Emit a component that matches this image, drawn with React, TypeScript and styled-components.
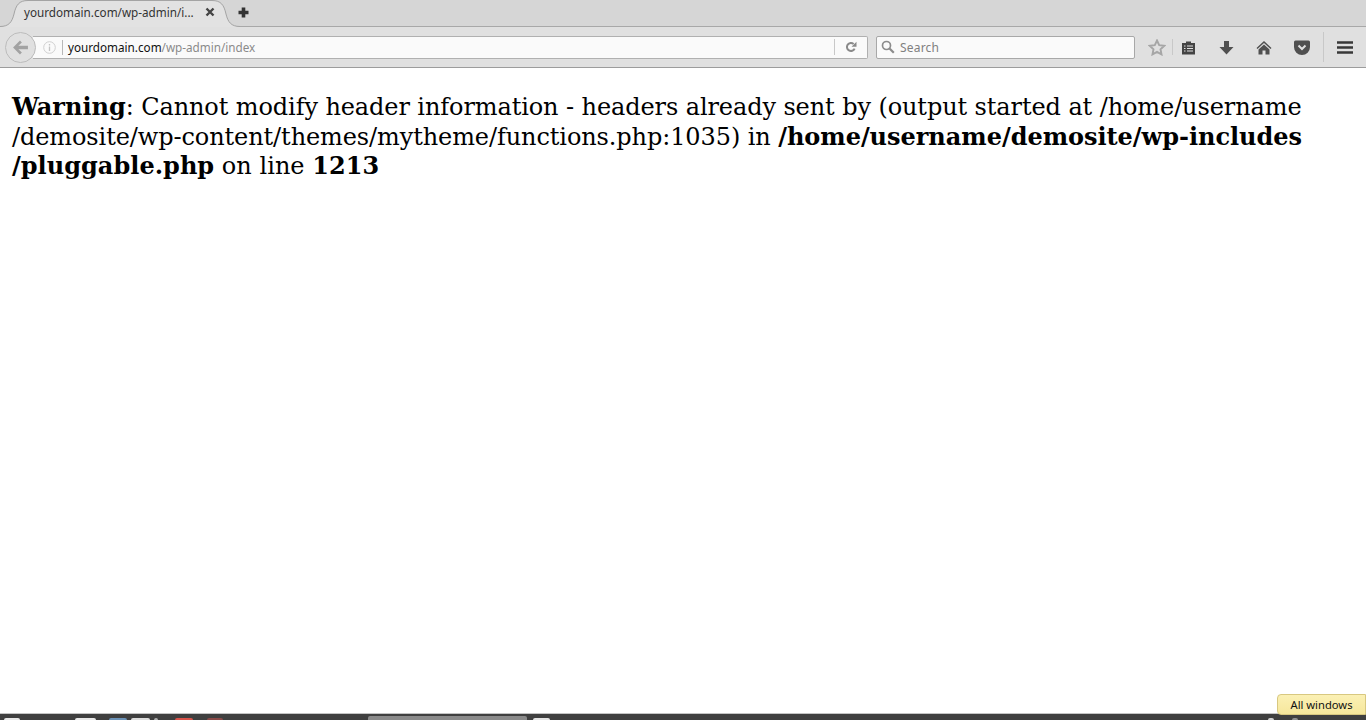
import styled, { createGlobalStyle } from "styled-components";

const Global = createGlobalStyle`
	html, body {
		margin: 0;
		padding: 0;
		height: 100%;
		overflow: hidden;
		background: #fff;
	}
`;

const Window = styled.div`
	position: relative;
	height: 720px;
	display: flex;
	flex-direction: column;
	font-family: "Noto Sans", "Open Sans", sans-serif;
`;

const TabBar = styled.div`
	height: 26px;
	background: #d6d6d6;
	border-bottom: 1px solid #a8a8a8;
	display: flex;
	align-items: flex-start;
	box-sizing: content-box;
`;

const Tab = styled.div`
	position: relative;
	width: 230px;
	height: 27px;
	padding: 0 15px 3px 24px;
	box-sizing: border-box;
	display: flex;
	align-items: center;
	justify-content: space-between;
	flex-shrink: 0;
`;

const TabShape = styled.svg`
	position: absolute;
	left: 0;
	top: 0;
`;

const TabTitle = styled.span`
	position: relative;
	font-size: 11.7px;
	color: #333;
	white-space: nowrap;
`;

const CloseIcon = styled.svg`
	position: relative;
`;

const NewTab = styled.div`
	width: 26px;
	height: 26px;
	display: flex;
	align-items: center;
	justify-content: center;
	padding-bottom: 2px;
	box-sizing: border-box;
`;

const NavBar = styled.div`
	height: 40px;
	background: #e0e0e0;
	border-bottom: 1px solid #9c9c9c;
	display: flex;
	align-items: center;
	padding-left: 5px;
`;

const BackButton = styled.div`
	position: relative;
	z-index: 1;
	width: 31px;
	height: 31px;
	box-sizing: border-box;
	border-radius: 50%;
	border: 1px solid #bcbcbc;
	background: #e0e0e0;
	display: flex;
	align-items: center;
	justify-content: center;
	flex-shrink: 0;
`;

const UrlBar = styled.div`
	width: 835px;
	height: 23px;
	margin-left: -3px;
	box-sizing: border-box;
	background: #fafafa;
	border: 1px solid #b0b0b0;
	border-left: none;
	border-radius: 0 2px 2px 0;
	display: flex;
	align-items: center;
	padding-left: 10px;
	flex-shrink: 0;
`;

const InfoIcon = styled.svg`
	margin-right: 6px;
	flex-shrink: 0;
`;

const Divider = styled.span<{ $h: number; $c?: string }>`
	width: 1px;
	height: ${(p) => p.$h}px;
	background: ${(p) => p.$c ?? "#c8c8c8"};
	flex-shrink: 0;
`;

const UrlText = styled.div`
	flex: 1;
	margin-left: 5px;
	font-size: 11.7px;
	color: #111;
	white-space: nowrap;
	span {
		color: #8a8a8a;
	}
`;

const Reload = styled.div`
	width: 32px;
	display: flex;
	justify-content: center;
`;

const SearchBox = styled.div`
	width: 259px;
	height: 23px;
	margin-left: 8px;
	box-sizing: border-box;
	background: #fafafa;
	border: 1px solid #a8a8a8;
	border-radius: 2px;
	display: flex;
	align-items: center;
	gap: 5px;
	padding-left: 4px;
	font-size: 12px;
	letter-spacing: 0.2px;
	color: #808080;
	flex-shrink: 0;
`;

const Tools = styled.div`
	flex: 1;
	display: flex;
	align-items: center;
`;

const ToolIcon = styled.div<{ $w: number; $l?: number }>`
	width: ${(p) => p.$w}px;
	padding-left: ${(p) => p.$l ?? 0}px;
	box-sizing: border-box;
	display: flex;
	justify-content: center;
	flex-shrink: 0;
`;

const Page = styled.div`
	flex: 1;
	padding: 24px 12px 0;
	background: #fff;
	font-family: "DejaVu Serif", serif;
	font-size: 24px;
	line-height: 29px;
	letter-spacing: -0.1px;
	color: #000;
	b {
		letter-spacing: -0.03px;
	}
`;

const LastLine = styled.div`
	margin-top: -1px;
	letter-spacing: 0.03px;
	b {
		letter-spacing: 0.03px;
	}
`;

const Taskbar = styled.div`
	height: 7px;
	background: #3f3f3f;
	border-top: 1px solid #c4c4c4;
	box-sizing: border-box;
	display: flex;
	align-items: flex-start;
	overflow: hidden;
`;

const Chip = styled.span<{ $w: number; $c: string; $l: number; $t: number }>`
	width: ${(p) => p.$w}px;
	height: 6px;
	margin-left: ${(p) => p.$l}px;
	margin-top: ${(p) => p.$t}px;
	background: ${(p) => p.$c};
	border-radius: 2px 2px 0 0;
	flex-shrink: 0;
`;

const Tooltip = styled.div`
	position: absolute;
	right: 0;
	top: 694px;
	width: 89px;
	height: 21px;
	box-sizing: border-box;
	background: linear-gradient(#fbf0b4, #f6e79c);
	border: 1px solid #d8c880;
	border-radius: 4px 0 0 4px;
	font-size: 11.2px;
	color: #111;
	display: flex;
	align-items: center;
	justify-content: center;
`;

const chips = [
	{ l: 4, w: 16, t: 4, c: "#e8e8e8" },
	{ l: 55, w: 21, t: 4, c: "#e8e8e8" },
	{ l: 13, w: 18, t: 4, c: "#6c93b8" },
	{ l: 4, w: 19, t: 4, c: "#dddddd" },
	{ l: 4, w: 4, t: 4, c: "#b0b0b0" },
	{ l: 17, w: 18, t: 4, c: "#d9534a" },
	{ l: 14, w: 16, t: 4, c: "#8a4a48" },
	{ l: 145, w: 159, t: 2, c: "#8a8a8a" },
	{ l: 6, w: 17, t: 4, c: "#e4e4e4" },
	{ l: 718, w: 6, t: 4, c: "#d0d0d0" },
	{ l: 18, w: 6, t: 4, c: "#909090" },
];

function App() {
	return (
		<Window>
			<Global />
			<TabBar>
				<Tab>
					<TabShape width="242" height="27" viewBox="0 0 242 27">
						<path
							d="M0 26.500C9 26.500 12 22 14 14C16 5 19 0.500 28 0.500H212C221 0.500 224 5 226 14C228 22 231 26.500 240 26.500V27H0z"
							fill="#e2e2e2"
						/>
						<path
							d="M0 26.500C9 26.500 12 22 14 14C16 5 19 0.500 28 0.500H212C221 0.500 224 5 226 14C228 22 231 26.500 240 26.500"
							fill="none"
							stroke="#a4a4a4"
						/>
					</TabShape>
					<TabTitle>yourdomain.com/wp-admin/i...</TabTitle>
					<CloseIcon width="10" height="10" viewBox="0 0 10 10">
						<path d="M1.500 1.500l7 7M8.500 1.500l-7 7" stroke="#444" strokeWidth="2.400" />
					</CloseIcon>
				</Tab>
				<NewTab>
					<svg width="11" height="11" viewBox="0 0 11 11">
						<path d="M5.500 0.500v10M0.500 5.500h10" stroke="#333" strokeWidth="3.600" />
					</svg>
				</NewTab>
			</TabBar>
			<NavBar>
				<BackButton>
					<svg width="17" height="15" viewBox="0 0 16 14">
						<path d="M7.500 0.500L1 7l6.500 6.500 1.800-1.800L6 8.600h9V5.400H6l3.300-3.100z" fill="#a2a2a2" />
					</svg>
				</BackButton>
				<UrlBar>
					<InfoIcon width="13" height="13" viewBox="0 0 13 13">
						<circle cx="6.500" cy="6.500" r="5.800" fill="none" stroke="#d0d0d0" />
						<path d="M6.500 3v1.400M6.500 5.600V10" stroke="#c4c4c4" strokeWidth="1.300" />
					</InfoIcon>
					<Divider $h={15} $c="#b8b8b8" />
					<UrlText>
						yourdomain.com<span>/wp-admin/index</span>
					</UrlText>
					<Divider $h={16} />
					<Reload>
						<svg width="12" height="12" viewBox="0 0 12 12">
							<path d="M9.600 7.600A4 4 0 1 1 8.600 3" fill="none" stroke="#8a8a8a" strokeWidth="2" />
							<path d="M11.500 0.800v5H6.500z" fill="#8a8a8a" />
						</svg>
					</Reload>
				</UrlBar>
				<SearchBox>
					<svg width="14" height="14" viewBox="0 0 14 14">
						<circle cx="5.500" cy="5.500" r="4" fill="none" stroke="#8c8c8c" strokeWidth="1.700" />
						<path d="M8.500 8.500l4.300 4.300" stroke="#8c8c8c" strokeWidth="2.200" />
					</svg>
					Search
				</SearchBox>
				<Tools>
					<ToolIcon $w={37} $l={7}>
						<svg width="18" height="17" viewBox="0 0 18 17">
							<path
								d="M9 1.500l2.200 4.700 5.100.6-3.800 3.500 1 5.100L9 12.900l-4.500 2.500 1-5.100L1.700 6.800l5.100-.6z"
								fill="none"
								stroke="#a6a6a6"
								strokeWidth="1.900"
							/>
						</svg>
					</ToolIcon>
					<Divider $h={16} />
					<ToolIcon $w={30}>
						<svg width="15" height="15" viewBox="0 0 15 15">
							<path d="M1 3h4V1.500h5V3h4v11.500H1z" fill="#444" />
							<path d="M3 6h1.500M3 8.500h1.500M3 11h1.500M6 6h6M6 8.500h6M6 11h6" stroke="#e0e0e0" strokeWidth="1.100" />
						</svg>
					</ToolIcon>
					<ToolIcon $w={46}>
						<svg width="15" height="15" viewBox="0 0 15 15">
							<path d="M5 1h5v6h4.500l-7 7.500-7-7.500H5z" fill="#505050" />
						</svg>
					</ToolIcon>
					<ToolIcon $w={30}>
						<svg width="16" height="15" viewBox="0 0 16 15">
							<path d="M8 1L0.500 8l1 1L8 3l6.500 6 1-1z" fill="#505050" />
							<path d="M8 4.500l-5.500 5v5h4v-4h3v4h4v-5z" fill="#505050" />
						</svg>
					</ToolIcon>
					<ToolIcon $w={44} $l={2}>
						<svg width="16" height="15" viewBox="0 0 16 15">
							<path d="M1.500 0.500h13A1.500 1.500 0 0 1 16 2v5a8 8 0 0 1-16 0V2A1.500 1.500 0 0 1 1.500 0.500z" fill="#505050" />
							<path d="M4.500 5.500L8 9l3.500-3.500" fill="none" stroke="#e0e0e0" strokeWidth="2" />
						</svg>
					</ToolIcon>
					<Divider $h={30} $c="#c8c8c8" />
					<ToolIcon $w={42}>
						<svg width="16" height="13" viewBox="0 0 16 13">
							<path d="M0 1.500h16M0 6.500h16M0 11.500h16" stroke="#383838" strokeWidth="2.400" />
						</svg>
					</ToolIcon>
				</Tools>
			</NavBar>
			<Page>
				<b>Warning</b>: Cannot modify header information - headers already sent by (output started at /home/username
				<br />
				/demosite/wp-content/themes/mytheme/functions.php:1035) in <b>/home/username/demosite/wp-includes</b>
				<LastLine>
					<b>/pluggable.php</b> on line <b>1213</b>
				</LastLine>
			</Page>
			<Taskbar>
				{chips.map((c, i) => (
					<Chip key={i} $l={c.l} $w={c.w} $t={c.t} $c={c.c} />
				))}
			</Taskbar>
			<Tooltip>All windows</Tooltip>
		</Window>
	);
}

export default App;
